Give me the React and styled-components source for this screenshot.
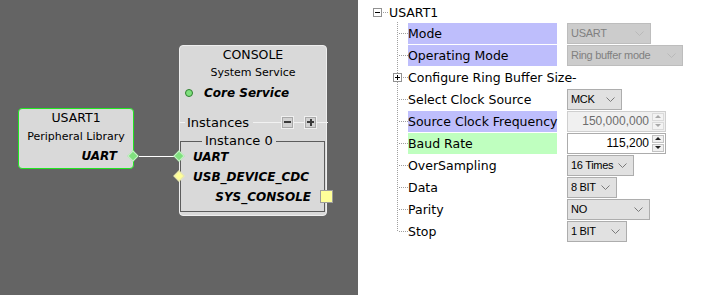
import React from 'react';
import styled, { createGlobalStyle, css } from 'styled-components';

const GlobalStyle = createGlobalStyle`
  body {
    margin: 0;
    font-family: 'DejaVu Sans', Verdana, sans-serif;
    color: #000;
  }
`;

const Page = styled.div`
  display: flex;
  width: 716px;
  height: 295px;
  overflow: hidden;
`;

/* ---------- diagram canvas ---------- */

const Canvas = styled.div`
  position: relative;
  width: 358px;
  flex: none;
  background: #646464;
`;

const Node = styled.div`
  position: absolute;
  left: ${(p) => p.$x}px;
  top: ${(p) => p.$y}px;
  width: ${(p) => p.$w}px;
  height: ${(p) => p.$h}px;
  box-sizing: border-box;
  border: 1px solid ${(p) => p.$border};
  border-radius: 4px;
  background: #d9d9d9;
  display: flex;
  flex-direction: column;
`;

const NodeTitle = styled.div`
  font-size: 12.5px;
  line-height: ${(p) => p.$lh || 16}px;
  padding-top: ${(p) => p.$pt || 0}px;
  text-align: center;
`;

const NodeSub = styled.div`
  font-size: 11px;
  line-height: 20px;
  text-align: center;
`;

const PortName = styled.div`
  font-size: 12px;
  font-weight: bold;
  font-style: italic;
  line-height: 20px;
  white-space: nowrap;
  text-align: ${(p) => (p.$right ? 'right' : 'left')};
`;

const UsartPort = styled(PortName)`
  line-height: 18px;
  padding-right: 16px;
`;

const Diamond = styled.div`
  position: absolute;
  left: ${(p) => p.$x}px;
  top: ${(p) => p.$y}px;
  width: 8px;
  height: 8px;
  box-sizing: border-box;
  transform: rotate(45deg);
  background: ${(p) => (p.$kind === 'yellow' ? '#ffff99' : '#80e07e')};
  border: 1px solid ${(p) => (p.$kind === 'yellow' ? '#e6e6b0' : '#c6f2c6')};
`;

const Wire = styled.div`
  position: absolute;
  left: 139px;
  top: 156px;
  width: 35px;
  height: 1px;
  background: #ffffff;
`;

const CoreRow = styled.div`
  display: flex;
  align-items: center;
  height: 20px;
  padding-left: 5px;
`;

const StatusDot = styled.span`
  width: 8px;
  height: 8px;
  box-sizing: border-box;
  border-radius: 50%;
  background: #7fe07d;
  border: 1px solid #2f7f2f;
  margin-right: 11px;
`;

const CoreLabel = styled.span`
  font-size: 12px;
  font-weight: bold;
  font-style: italic;
`;

const InstancesRow = styled.div`
  display: flex;
  align-items: center;
  height: 20px;
  margin: 9px -2px 0 -1px;
`;

const HLine = styled.span`
  height: 1px;
  background: #f2f2f2;
  flex: ${(p) => (p.$w ? 'none' : 1)};
  width: ${(p) => (p.$w ? `${p.$w}px` : 'auto')};
  margin: 0 ${(p) => p.$mr || 0}px 0 ${(p) => p.$ml || 0}px;
`;

const InstancesText = styled.span`
  font-size: 13px;
  margin-left: 2px;
`;

const TinyButton = styled.span`
  position: relative;
  width: 13px;
  height: 13px;
  box-sizing: border-box;
  border: 1px solid #f0f0f0;
  box-shadow: inset 0 0 0 1px #a9a9a9;
  background: #d2d2d2;
  flex: none;

  &::before {
    content: '';
    position: absolute;
    left: 2px;
    top: 4.5px;
    width: 7px;
    height: 2px;
    background: #3a3a3a;
  }

  ${(p) =>
    p.$plus &&
    css`
      &::after {
        content: '';
        position: absolute;
        left: 4.5px;
        top: 2px;
        width: 2px;
        height: 7px;
        background: #3a3a3a;
      }
    `}
`;

const Group = styled.fieldset`
  margin: 3px 1px 0 0;
  padding: 0 13px 4px 12px;
  border: 1px solid #5c5c5c;
  min-width: 0;
`;

const GroupLegend = styled.legend`
  font-size: 13px;
  line-height: 12px;
  padding: 0 3px;
  margin-left: 9px;
`;

const Socket = styled.div`
  position: absolute;
  left: 140px;
  top: 144px;
  width: 13px;
  height: 13px;
  box-sizing: border-box;
  background: #ffff99;
  border: 1px solid #9c9c9c;
`;

/* ---------- configuration tree ---------- */

const Panel = styled.div`
  flex: 1;
  background: #ffffff;
  padding: 2px 0 0 15px;
  font-size: 12.5px;
`;

const RootRow = styled.div`
  display: flex;
  align-items: center;
  height: 20px;
`;

const ExpandBox = styled.span`
  position: relative;
  flex: none;
  width: 9px;
  height: 9px;
  box-sizing: border-box;
  border: 1px solid #919191;
  background: #fff;
  margin-left: ${(p) => p.$ml || 0}px;

  &::before {
    content: '';
    position: absolute;
    left: 1px;
    top: 3px;
    width: 5px;
    height: 1px;
    background: #000;
  }

  ${(p) =>
    p.$plus &&
    css`
      &::after {
        content: '';
        position: absolute;
        left: 3px;
        top: 1px;
        width: 1px;
        height: 5px;
        background: #000;
      }
    `}
`;

const Dash = styled.span`
  width: ${(p) => p.$w}px;
  margin-left: 1px;
  height: 1px;
  background: repeating-linear-gradient(to right, #a0a0a0 0 1px, transparent 1px 2px);
`;

const RootLabel = styled.span`
  margin-left: 1px;
`;

const Children = styled.div`
  margin-left: 24px;
`;

const dots = '#a0a0a0';

const ChildRow = styled.div`
  display: flex;
  align-items: center;
  height: 22px;
  background:
    repeating-linear-gradient(to bottom, ${dots} 0 1px, transparent 1px 2px) 0 0 /
      1px ${(p) => (p.$last ? '12px' : '100%')} no-repeat,
    repeating-linear-gradient(to right, ${dots} 0 1px, transparent 1px 2px) 2px 11px / 9px
      1px no-repeat;
`;

const Label = styled.div`
  flex: none;
  width: 149px;
  height: 21px;
  line-height: 21px;
  margin-left: ${(p) => (p.$afterBox ? 6 : 11)}px;
  white-space: nowrap;
  background: ${(p) =>
    p.$tone === 'blue' ? '#bebefc' : p.$tone === 'green' ? '#bfffbf' : 'transparent'};
`;

const controlFont = css`
  font-family: 'Liberation Sans', Arial, sans-serif;
  font-size: 11px;
`;

const Combo = styled.div`
  ${controlFont};
  flex: none;
  margin-left: 10px;
  width: ${(p) => p.$w}px;
  height: 21px;
  box-sizing: border-box;
  display: flex;
  align-items: center;
  justify-content: space-between;
  gap: 2px;
  padding: 0 6px 0 3px;
  border: 1px solid ${(p) => (p.$disabled ? '#bdbdbd' : '#adadad')};
  background: ${(p) => (p.$disabled ? '#cccccc' : '#e1e1e1')};
  color: ${(p) => (p.$disabled ? '#808080' : '#000')};
  white-space: nowrap;
  letter-spacing: -0.3px;

  svg {
    flex: none;
  }
`;

const Spinner = styled.div`
  ${controlFont};
  flex: none;
  margin-left: 10px;
  width: 99px;
  height: 21px;
  box-sizing: border-box;
  display: flex;
  align-items: stretch;
  border: 1px solid ${(p) => (p.$disabled ? '#cfcfcf' : '#acacac')};
  background: ${(p) => (p.$disabled ? '#f0f0f0' : '#ffffff')};
  color: ${(p) => (p.$disabled ? '#6d6d6d' : '#000')};
`;

const SpinValue = styled.span`
  flex: 1;
  text-align: right;
  line-height: 19px;
  padding-right: 3px;
  font-size: 12px;
`;

const SpinColumn = styled.span`
  display: flex;
  flex-direction: column;
  gap: 1px;
  width: 12px;
  padding: 1px 1px 1px 0;
`;

const SpinButton = styled.span`
  flex: 1;
  display: flex;
  align-items: center;
  justify-content: center;
  border: 1px solid ${(p) => (p.$disabled ? '#dadada' : '#c2c2c2')};
  background: ${(p) => (p.$disabled ? '#f3f3f3' : '#f0f0f0')};

  &::before {
    content: '';
    border-left: 3px solid transparent;
    border-right: 3px solid transparent;
    ${(p) =>
      p.$down
        ? css`border-top: 3px solid ${p.$disabled ? '#a8a8a8' : '#202020'};`
        : css`border-bottom: 3px solid ${p.$disabled ? '#a8a8a8' : '#202020'};`}
  }
`;

const Chevron = ({ color }) => (
  <svg width="9" height="5" viewBox="0 0 9 5">
    <polyline points="0.5,0.5 4.5,4.5 8.5,0.5" fill="none" stroke={color} strokeWidth="1" />
  </svg>
);

const Select = ({ value, w, disabled }) => (
  <Combo $w={w} $disabled={disabled}>
    <span>{value}</span>
    <Chevron color={disabled ? '#b9b9b9' : '#7a7a7a'} />
  </Combo>
);

const Spin = ({ value, disabled }) => (
  <Spinner $disabled={disabled}>
    <SpinValue>{value}</SpinValue>
    <SpinColumn>
      <SpinButton $disabled={disabled} />
      <SpinButton $disabled={disabled} $down />
    </SpinColumn>
  </Spinner>
);

const rows = [
  { label: 'Mode', tone: 'blue', control: <Select value="USART" w={84} disabled /> },
  { label: 'Operating Mode', tone: 'blue', control: <Select value="Ring buffer mode" w={116} disabled /> },
  { label: 'Configure Ring Buffer Size-', expandable: true },
  { label: 'Select Clock Source', control: <Select value="MCK" w={55} /> },
  { label: 'Source Clock Frequency', tone: 'blue', control: <Spin value="150,000,000" disabled /> },
  { label: 'Baud Rate', tone: 'green', control: <Spin value="115,200" /> },
  { label: 'OverSampling', control: <Select value="16 Times" w={67} /> },
  { label: 'Data', control: <Select value="8 BIT" w={50} /> },
  { label: 'Parity', control: <Select value="NO" w={83} /> },
  { label: 'Stop', control: <Select value="1 BIT" w={60} /> },
];

export default function App() {
  return (
    <Page>
      <GlobalStyle />
      <Canvas>
        <Node $x={18} $y={108} $w={116} $h={61} $border="#22e622">
          <NodeTitle $lh={18}>USART1</NodeTitle>
          <NodeSub>Peripheral Library</NodeSub>
          <UsartPort $right>UART</UsartPort>
          <Diamond $x={110} $y={43} />
        </Node>
        <Wire />
        <Node $x={179} $y={45} $w={148} $h={171} $border="#eeeeee">
          <NodeTitle $pt={1}>CONSOLE</NodeTitle>
          <NodeSub>System Service</NodeSub>
          <CoreRow>
            <StatusDot />
            <CoreLabel>Core Service</CoreLabel>
          </CoreRow>
          <InstancesRow>
            <HLine $w={6} />
            <InstancesText>Instances</InstancesText>
            <HLine $ml={4} />
            <TinyButton />
            <HLine $w={10} />
            <TinyButton $plus />
            <HLine $w={11} />
          </InstancesRow>
          <Group>
            <GroupLegend>Instance 0</GroupLegend>
            <PortName>UART</PortName>
            <PortName>USB_DEVICE_CDC</PortName>
            <PortName $right>SYS_CONSOLE</PortName>
          </Group>
          <Diamond $x={-5} $y={106} />
          <Diamond $x={-5} $y={126} $kind="yellow" />
          <Socket />
        </Node>
      </Canvas>
      <Panel>
        <RootRow>
          <ExpandBox />
          <Dash $w={5} />
          <RootLabel>USART1</RootLabel>
        </RootRow>
        <Children>
          {rows.map((r, i) => (
            <ChildRow key={r.label} $last={i === rows.length - 1}>
              {r.expandable && <ExpandBox $plus $ml={-4} />}
              <Label $tone={r.tone} $afterBox={r.expandable}>
                {r.label}
              </Label>
              {r.control}
            </ChildRow>
          ))}
        </Children>
      </Panel>
    </Page>
  );
}
